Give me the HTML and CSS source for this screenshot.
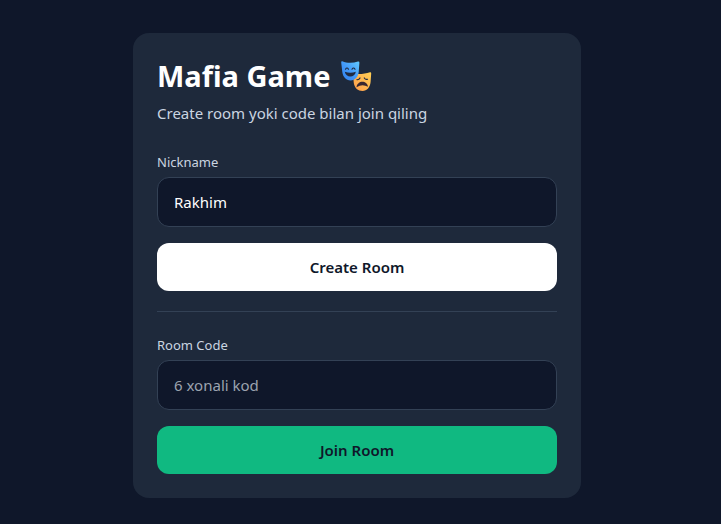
FILE: index.html
```html
<!DOCTYPE html>
<html lang="uz">
<head>
<meta charset="utf-8">
<meta name="viewport" content="width=device-width, initial-scale=1">
<title>Mafia Game</title>
<link rel="stylesheet" href="styles.css">
</head>
<body>
<main class="page">
  <section class="card">
    <h1 class="title">Mafia Game
      <svg class="masks" viewBox="0 0 32 32" aria-hidden="true">
        <defs>
          <linearGradient id="blue" x1="0" y1="1" x2="1" y2="0"><stop offset="0" stop-color="#2f7fee"/><stop offset="0.5" stop-color="#449af8"/><stop offset="1" stop-color="#62cbff"/></linearGradient>
          <linearGradient id="gold" x1="0" y1="1" x2="1" y2="0"><stop offset="0" stop-color="#ff9b4b"/><stop offset="1" stop-color="#ffd055"/></linearGradient>
        </defs>
        <path fill="url(#gold)" d="M14 13.500C18 14.500 25 14 30 12.200Q31.300 12 31.200 13.500L30.600 22C30.200 27 27 31 22.500 31C18 31 14.500 28 13.800 23L13 14.500Q13 13.300 14 13.500Z"/>
        <path fill="url(#blue)" d="M2.300 1.300C7 3.300 13 3.200 18 1.500Q19.500 1.200 19.400 2.800L18.700 12C18.200 17 15 20.500 10.500 20.400C6 20.300 3 17 2.300 12L1.200 2.500Q1.100 1 2.300 1.300Z"/>
        <g fill="none" stroke="#202b42" stroke-width="1.200" stroke-linecap="round">
          <path d="M5.500 9.200Q7 6.800 8.500 9.200M12 9.200Q13.500 6.800 15 9.200"/>
          <path d="M17 19.700Q19 20 20 18M24.300 18Q25.500 20 27.500 19.300"/>
        </g>
        <path fill="#202b42" d="M4.800 11.700Q10.300 14 15.800 11.700C15.200 18 5.600 18 4.800 11.700Z"/>
        <path fill="#3a2730" d="M16.500 27.300C17.200 20 27.200 20 28 26.800Q22.300 23.300 16.500 27.300Z"/>
      </svg>
    </h1>
    <p class="subtitle">Create room yoki code bilan join qiling</p>
    <form class="create">
      <label class="label" for="nickname">Nickname</label>
      <input class="field" id="nickname" type="text" value="Rakhim">
      <button class="button button-create" type="button">Create Room</button>
    </form>
    <form class="join">
      <label class="label" for="code">Room Code</label>
      <input class="field" id="code" type="text" placeholder="6 xonali kod">
      <button class="button button-join" type="button">Join Room</button>
    </form>
  </section>
</main>
</body>
</html>
```
FILE: styles.css
```css
* {
  box-sizing: border-box;
}

body {
  margin: 0;
  background: #0f172a;
  color: #fff;
  font-family: "Segoe UI", "Noto Sans", sans-serif;
  font-size: 15px;
  line-height: 24px;
}

.page {
  min-height: 100vh;
  display: flex;
  align-items: center;
  justify-content: center;
  padding: 23px 23px 16px 16px;
}

.card {
  width: 100%;
  max-width: 448px;
  padding: 24px;
  border-radius: 16px;
  background: #1e293b;
}

.title {
  display: flex;
  align-items: center;
  gap: 10px;
  margin: 0 0 6px;
  font-size: 29px;
  font-weight: 700;
  line-height: 38px;
}

.masks {
  width: 32px;
  height: 32px;
}

.subtitle {
  margin: 0 0 28px;
  color: #cbd5e1;
}

.label {
  display: block;
  margin-bottom: 6px;
  color: #cbd5e1;
  font-size: 13px;
  line-height: 18px;
}

.field {
  display: block;
  width: 100%;
  margin: 0 0 16px;
  padding: 12px 16px;
  border: 1px solid #334155;
  border-radius: 12px;
  background: #0f172a;
  color: #fff;
  font: inherit;
  outline: none;
}

.field::placeholder {
  color: #9ca3af;
  opacity: 1;
}

.button {
  display: block;
  width: 100%;
  padding: 12px 16px;
  border: 0;
  border-radius: 12px;
  color: #0f172a;
  font: inherit;
  font-weight: 600;
}

.button-create {
  background: #fff;
}

.button-join {
  background: #10b981;
}

.join {
  margin-top: 20px;
  padding-top: 24px;
  border-top: 1px solid #334155;
}
```
